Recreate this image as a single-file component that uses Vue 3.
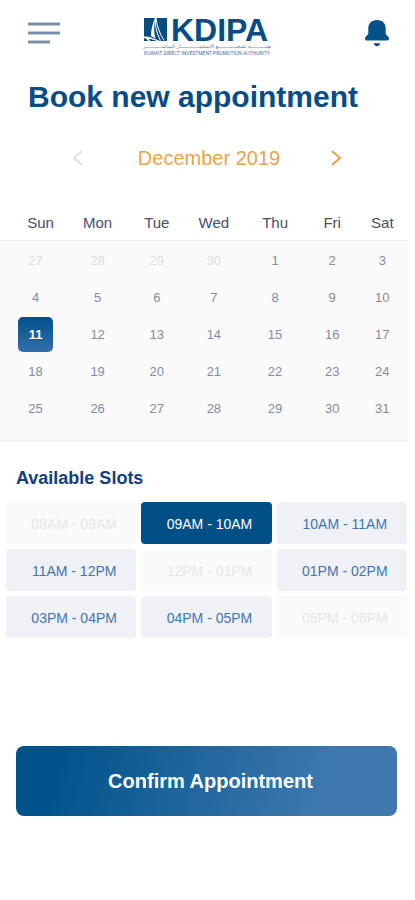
<script setup>
import { ref } from 'vue'

const weekdays = ['Sun', 'Mon', 'Tue', 'Wed', 'Thu', 'Fri', 'Sat']
const weeks = [
  [27, 28, 29, 30, 1, 2, 3],
  [4, 5, 6, 7, 8, 9, 10],
  [11, 12, 13, 14, 15, 16, 17],
  [18, 19, 20, 21, 22, 23, 24],
  [25, 26, 27, 28, 29, 30, 31],
]
const slots = [
  { label: '08AM - 09AM', open: false },
  { label: '09AM - 10AM', open: true },
  { label: '10AM - 11AM', open: true },
  { label: '11AM - 12PM', open: true },
  { label: '12PM - 01PM', open: false },
  { label: '01PM - 02PM', open: true },
  { label: '03PM - 04PM', open: true },
  { label: '04PM - 05PM', open: true },
  { label: '05PM - 06PM', open: false },
]

const selectedDay = ref(11)
const selectedSlot = ref('09AM - 10AM')

const isOutside = (week, day) => week === 0 && day > 7
const isSelected = (week, day) => !isOutside(week, day) && day === selectedDay.value
</script>

<template>
  <main class="page">
    <header class="topbar">
      <button class="icon-button" type="button" aria-label="Menu">
        <svg width="32" height="22" viewBox="0 0 32 22">
          <path d="M0 2H32M0 11H32M0 20H22" fill="none" stroke="#8397b5" stroke-width="3" />
          <path d="M0 2H32M0 11H32M0 20H22" fill="none" stroke="#6a83a6" stroke-width="1" />
        </svg>
      </button>
      <svg class="logo" width="128" height="40" viewBox="0 0 128 40" role="img" aria-label="KDIPA">
        <path d="M1 1H24V24H1Z" fill="#064d86" />
        <path d="M12 1C9.500 7 8 13 8 19L12.500 21.500C10.500 15 10.800 8 12.600 1Z" fill="#fff" />
        <path d="M12.500 1C12 9 13.500 16 17.500 23.500M13 1C14 10 17 17 21 23.500" fill="none" stroke="#fff" stroke-width="1" />
        <path d="M1 19.500C5 19 9 20.500 12 22L17 24H14C10 22.500 8 22 6 22L7 24H5C4 22.300 3 21.400 1 21Z" fill="#fff" />
        <text class="logo-name" x="28" y="24">KDIPA</text>
        <text class="logo-arabic" x="64" y="31" text-anchor="middle">هيئــــــــــة تشجيــــــــــــع الاستثمـــــــــــــار المباشـــــــــــر</text>
        <text class="logo-line" x="64" y="38" text-anchor="middle">KUWAIT DIRECT INVESTMENT PROMOTION AUTHORITY</text>
      </svg>
      <button class="icon-button" type="button" aria-label="Notifications">
        <svg width="26" height="28" viewBox="0 0 26 28">
          <path d="M13 1C7.500 1 4.300 4.500 4.300 9.500V14.500C4.300 16 1 17.300 1 19.500C1 21 1.800 21.600 3 21.600H23C24.200 21.600 25 21 25 19.500C25 17.300 21.700 16 21.700 14.500V9.500C21.700 4.500 18.500 1 13 1Z" fill="#045289" />
          <path d="M9.800 24.300H16.200C15.600 26.300 14.500 27.200 13 27.200C11.500 27.200 10.400 26.300 9.800 24.300Z" fill="#08408a" />
        </svg>
      </button>
    </header>

    <h1 class="title">Book new appointment</h1>

    <div class="month">
      <button class="icon-button" type="button" aria-label="Previous month">
        <svg width="12" height="18" viewBox="0 0 12 18">
          <path d="M10 2L2 9L10 16" fill="none" stroke="#dedede" stroke-width="1.800" />
        </svg>
      </button>
      <h2 class="month-name">December 2019</h2>
      <button class="icon-button" type="button" aria-label="Next month">
        <svg width="12" height="18" viewBox="0 0 12 18">
          <path d="M2 2L10 9L2 16" fill="none" stroke="#eaa24a" stroke-width="2" />
        </svg>
      </button>
    </div>

    <table class="calendar">
      <thead>
        <tr>
          <th v-for="name in weekdays" :key="name" scope="col">{{ name }}</th>
        </tr>
      </thead>
      <tbody>
        <tr v-for="(week, w) in weeks" :key="w">
          <td v-for="day in week" :key="day">
            <button
              class="day"
              :class="{ selected: isSelected(w, day) }"
              type="button"
              :disabled="isOutside(w, day)"
              @click="selectedDay = day"
            >{{ day }}</button>
          </td>
        </tr>
      </tbody>
    </table>

    <h2 class="slots-title">Available Slots</h2>
    <div class="slots">
      <button
        v-for="slot in slots"
        :key="slot.label"
        class="slot"
        :class="{ selected: slot.label === selectedSlot }"
        type="button"
        :disabled="!slot.open"
        @click="selectedSlot = slot.label"
      >{{ slot.label }}</button>
    </div>

    <button class="confirm" type="button">Confirm Appointment</button>
  </main>
</template>

<style>
body {
  background: #fff;
}
</style>

<style scoped>
.page {
  font-family: "Liberation Sans", Arial, sans-serif;
  color: #084c86;
}

button {
  margin: 0;
  padding: 0;
  border: 0;
  background: none;
  font-family: inherit;
  cursor: pointer;
}

button:disabled {
  cursor: default;
}

.topbar {
  display: flex;
  align-items: center;
  justify-content: space-between;
  height: 40px;
  padding: 17px 25px 0 28px;
}

.icon-button {
  display: flex;
}

.topbar .icon-button {
  height: 28px;
  align-self: flex-start;
  align-items: center;
  padding-top: 4px;
}

.logo {
  margin-right: 10px;
  overflow: visible;
}

.logo-name {
  font-size: 32px;
  font-weight: 700;
  fill: #064d86;
}

.logo-arabic {
  font-family: "DejaVu Sans", sans-serif;
  font-size: 5px;
  fill: #4f7ca8;
}

.logo-line {
  font-family: Roboto, sans-serif;
  font-size: 5px;
  fill: #3f70a0;
}

.title {
  margin: 22px 28px 0;
  font-size: 30px;
  font-weight: 700;
  line-height: 36px;
}

.month {
  display: flex;
  align-items: center;
  justify-content: space-between;
  margin-top: 31px;
  padding: 0 73px 0 72px;
}

.month-name {
  margin: 0;
  padding-left: 4px;
  font-size: 20px;
  font-weight: 400;
  line-height: 24px;
  color: #e9a34e;
}

.calendar {
  width: calc(100% - 7px);
  margin-top: 36px;
  border-spacing: 0;
  table-layout: fixed;
}

.calendar th {
  height: 32px;
  padding: 0 0 2px;
  font-size: 15px;
  font-weight: 400;
  color: #45506a;
}

.calendar th:nth-child(1) { width: 13%; padding-left: 14px; }
.calendar th:nth-child(2) { width: 15%; }
.calendar th:nth-child(3) { width: 14%; }
.calendar th:nth-child(4) { width: 14%; }
.calendar th:nth-child(5) { width: 16%; }
.calendar th:nth-child(6) { width: 12%; }

.calendar td {
  height: 37px;
  padding: 0;
  background: #fafafa;
  text-align: center;
}

.calendar td:first-child {
  padding-left: 4px;
}

.calendar tbody tr:first-child td {
  padding-top: 1px;
  border-top: 1px solid #ececee;
}

.calendar tbody tr:last-child td {
  padding-bottom: 13px;
  border-bottom: 1px solid #ececee;
}

.day {
  width: 35px;
  height: 35px;
  border-radius: 5px;
  font-size: 13px;
  color: #858aa3;
  vertical-align: middle;
}

.day:disabled {
  color: #dedede;
}

.day.selected {
  background: linear-gradient(#004f8a, #3470ab);
  color: #fff;
  font-weight: 700;
}

.slots-title {
  margin: 25px 16px 0;
  font-size: 18px;
  font-weight: 700;
  line-height: 24px;
  color: #123f80;
}

.slots {
  display: grid;
  grid-template-columns: repeat(3, 1fr);
  gap: 5px;
  margin: 12px 8px 0 6px;
}

.slot {
  height: 42px;
  padding: 2px 0 0 6px;
  border-radius: 4px;
  background: #eff1f7;
  color: #4276ac;
  font-size: 14px;
}

.slot:disabled {
  background: #fafafa;
  color: #e6e7e8;
}

.slot.selected {
  background: #004f87;
  color: #fff;
}

.confirm {
  display: block;
  width: calc(100% - 34px);
  height: 70px;
  margin: 108px 18px 0 16px;
  padding-left: 8px;
  border-radius: 8px;
  background: linear-gradient(105deg, #00528b 10%, #3e78ae 80%);
  color: #fff;
  font-size: 20px;
  font-weight: 700;
}
</style>
